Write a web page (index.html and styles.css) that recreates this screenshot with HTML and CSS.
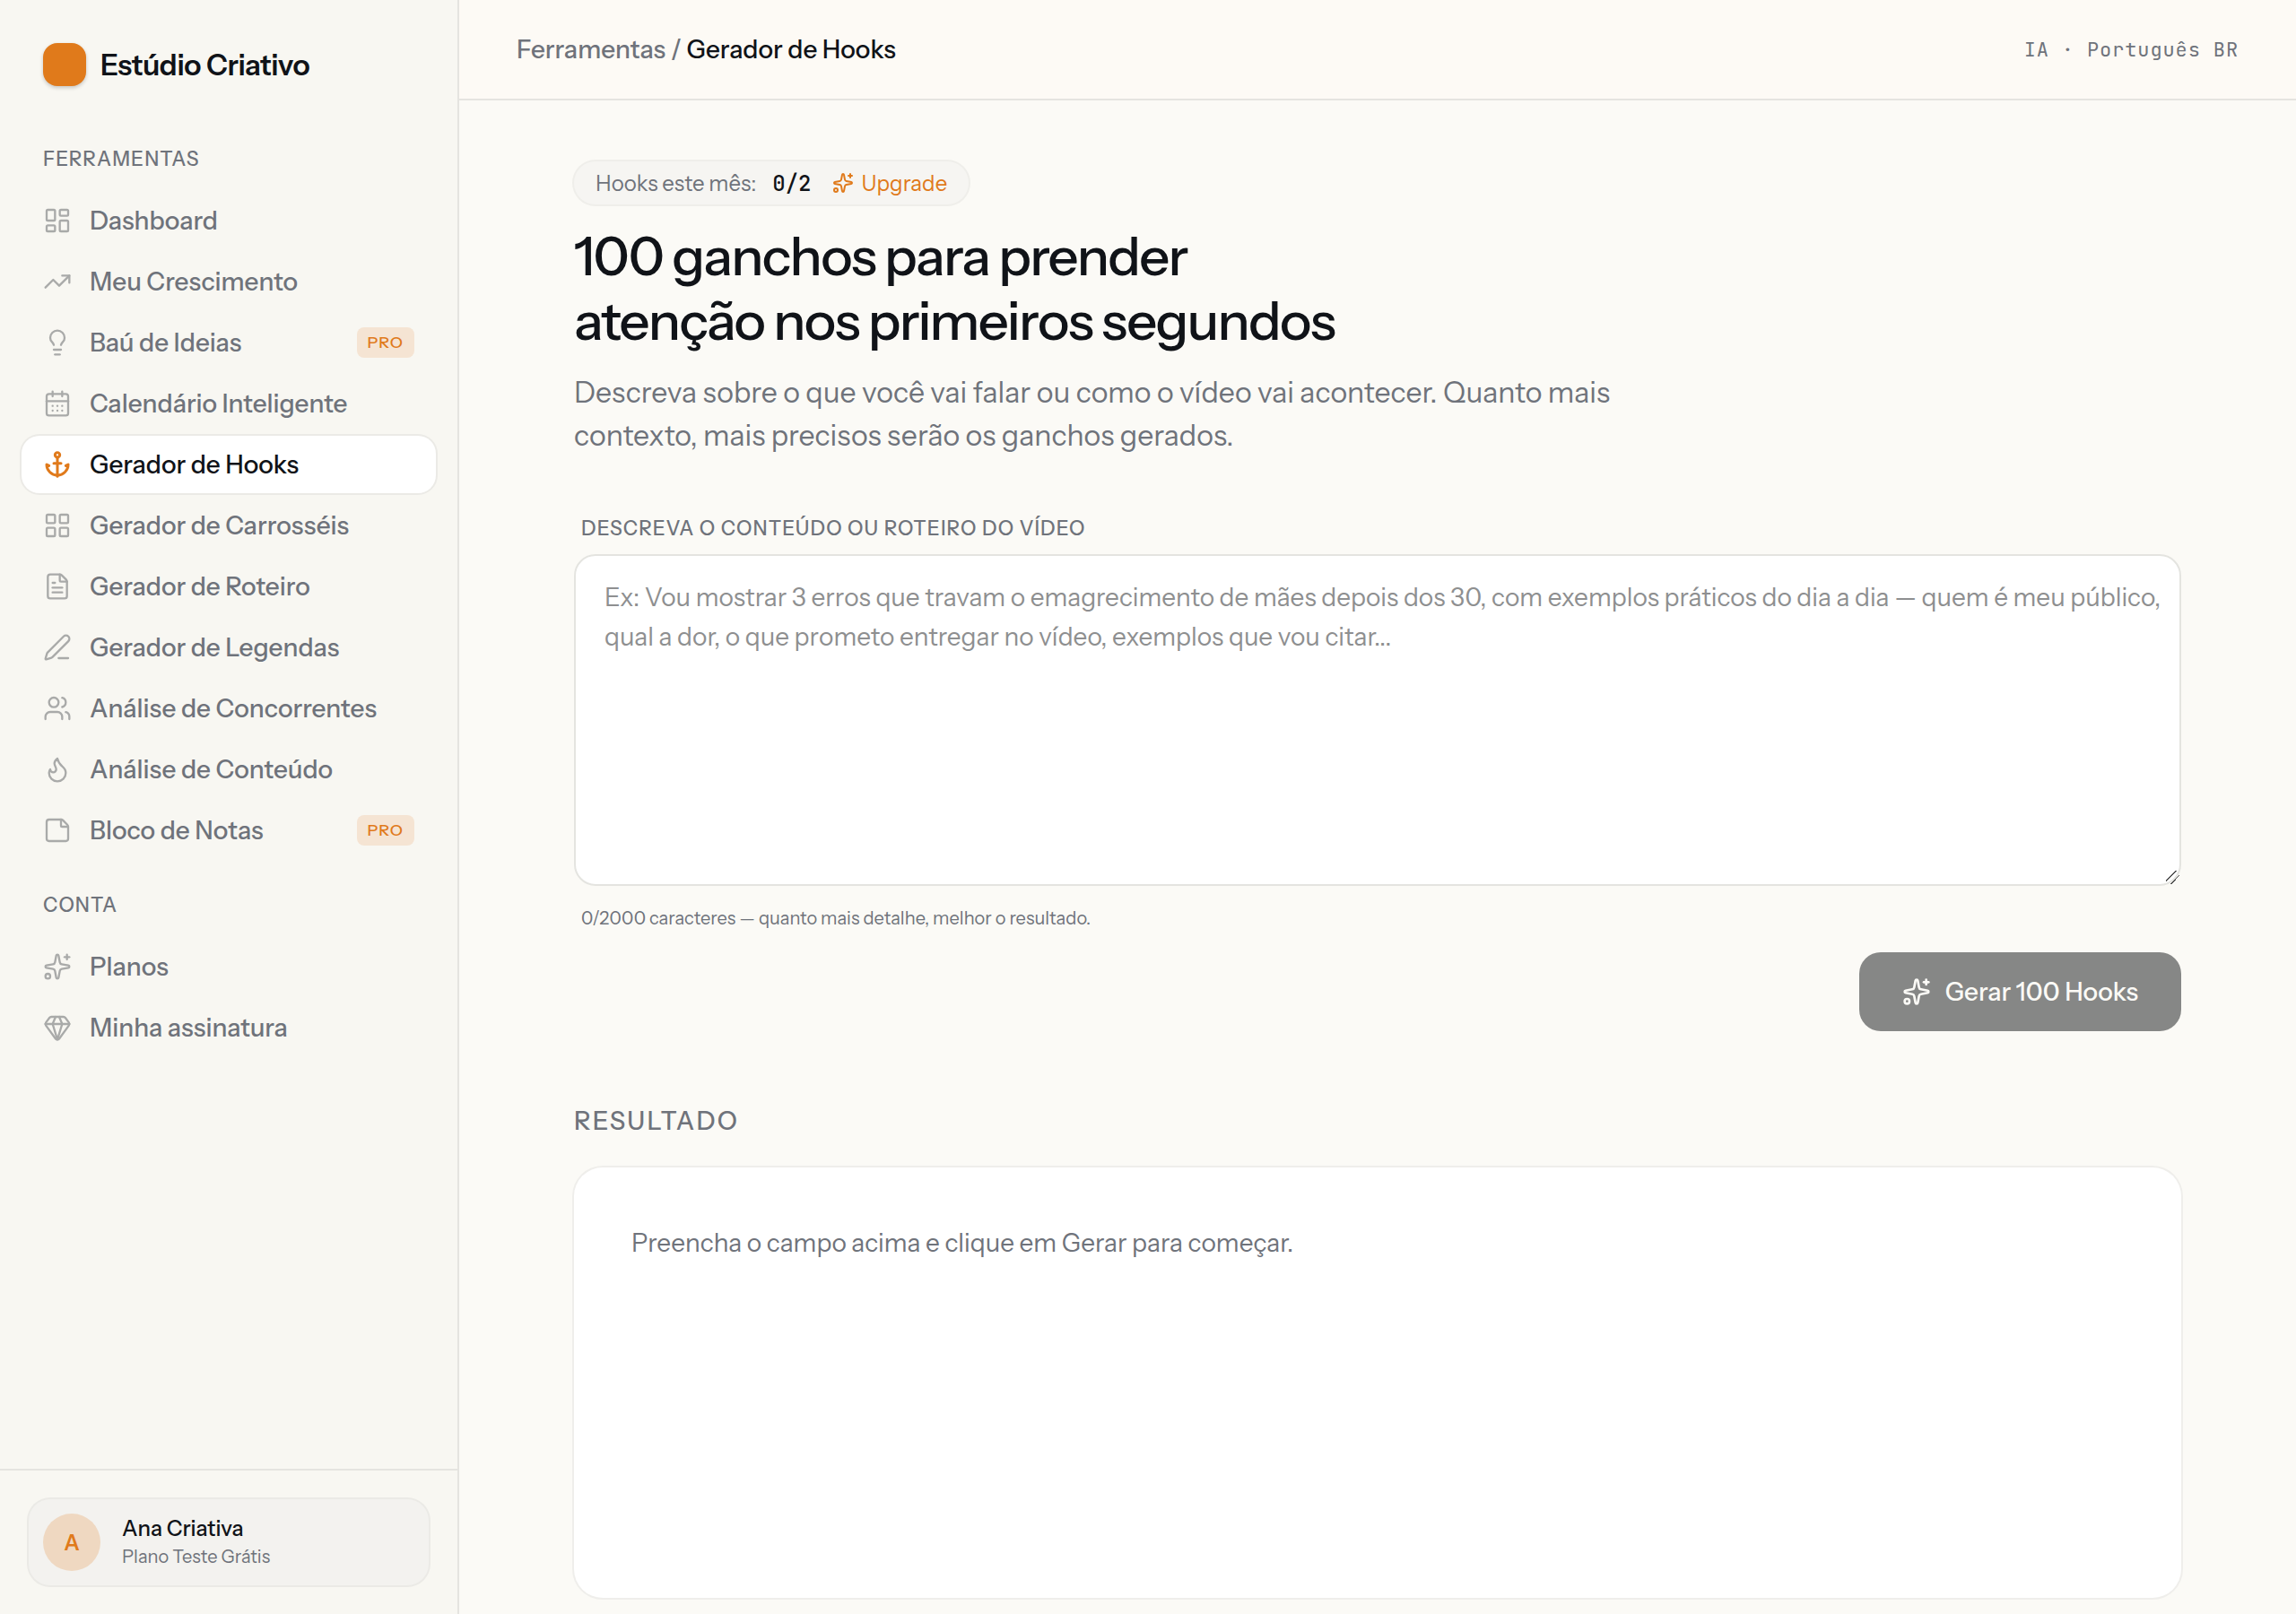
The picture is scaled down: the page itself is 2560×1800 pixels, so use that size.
FILE: index.html
```html
<!DOCTYPE html>
<html lang="pt-BR">
<head>
    <meta charset="UTF-8">
    <meta name="viewport" content="width=device-width, initial-scale=1.0">
    <title>Gerador de Hooks - Estúdio Criativo</title>

    <link rel="stylesheet" href="styles.css">
</head>
<body>
    <!-- menu lateral -->
    <aside class="sidebar">
        <a class="brand" href="#">
            <span class="brand-logo"></span>
            <span>Estúdio Criativo</span>
        </a>

        <nav class="menu">
            <h2 class="menu-title">Ferramentas</h2>
            <ul class="menu-list">
                <li>
                    <a class="menu-item" href="#">
                        <svg class="icon" viewBox="0 0 24 24"><rect x="3" y="3" width="7" height="9" rx="1"/><rect x="14" y="3" width="7" height="5" rx="1"/><rect x="14" y="12" width="7" height="9" rx="1"/><rect x="3" y="16" width="7" height="5" rx="1"/></svg>
                        Dashboard
                    </a>
                </li>
                <li>
                    <a class="menu-item" href="#">
                        <svg class="icon" viewBox="0 0 24 24"><path d="M16 7h6v6"/><path d="m22 7-8.5 8.5-5-5L2 17"/></svg>
                        Meu Crescimento
                    </a>
                </li>
                <li>
                    <a class="menu-item" href="#">
                        <svg class="icon" viewBox="0 0 24 24"><path d="M15 14c.2-1 .7-1.7 1.5-2.5 1-.9 1.5-2.2 1.5-3.5A6 6 0 0 0 6 8c0 1 .2 2.2 1.5 3.5.7.7 1.3 1.5 1.5 2.5"/><path d="M9 18h6"/><path d="M10 22h4"/></svg>
                        Baú de Ideias
                        <span class="pro">PRO</span>
                    </a>
                </li>
                <li>
                    <a class="menu-item" href="#">
                        <svg class="icon" viewBox="0 0 24 24"><path d="M8 2v4"/><path d="M16 2v4"/><rect x="3" y="4" width="18" height="18" rx="2"/><path d="M3 10h18"/><path d="M8 14h.01"/><path d="M12 14h.01"/><path d="M16 14h.01"/><path d="M8 18h.01"/><path d="M12 18h.01"/><path d="M16 18h.01"/></svg>
                        Calendário Inteligente
                    </a>
                </li>
                <li>
                    <a class="menu-item active" href="#" aria-current="page">
                        <svg class="icon" viewBox="0 0 24 24"><path d="M12 6v16"/><path d="m19 13 2-1a9 9 0 0 1-18 0l2 1"/><path d="M9 11h6"/><circle cx="12" cy="4" r="2"/></svg>
                        Gerador de Hooks
                    </a>
                </li>
                <li>
                    <a class="menu-item" href="#">
                        <svg class="icon" viewBox="0 0 24 24"><rect x="3" y="3" width="7" height="7" rx="1"/><rect x="14" y="3" width="7" height="7" rx="1"/><rect x="14" y="14" width="7" height="7" rx="1"/><rect x="3" y="14" width="7" height="7" rx="1"/></svg>
                        Gerador de Carrosséis
                    </a>
                </li>
                <li>
                    <a class="menu-item" href="#">
                        <svg class="icon" viewBox="0 0 24 24"><path d="M6 22a2 2 0 0 1-2-2V4a2 2 0 0 1 2-2h8a2.4 2.4 0 0 1 1.704.706l3.588 3.588A2.4 2.4 0 0 1 20 8v12a2 2 0 0 1-2 2z"/><path d="M14 2v5a1 1 0 0 0 1 1h5"/><path d="M10 9H8"/><path d="M16 13H8"/><path d="M16 17H8"/></svg>
                        Gerador de Roteiro
                    </a>
                </li>
                <li>
                    <a class="menu-item" href="#">
                        <svg class="icon" viewBox="0 0 24 24"><path d="M13 21h8"/><path d="M21.174 6.812a1 1 0 0 0-3.986-3.987L3.842 16.174a2 2 0 0 0-.5.83l-1.321 4.352a.5.5 0 0 0 .623.622l4.353-1.32a2 2 0 0 0 .83-.497z"/></svg>
                        Gerador de Legendas
                    </a>
                </li>
                <li>
                    <a class="menu-item" href="#">
                        <svg class="icon" viewBox="0 0 24 24"><path d="M16 21v-2a4 4 0 0 0-4-4H6a4 4 0 0 0-4 4v2"/><path d="M16 3.128a4 4 0 0 1 0 7.744"/><path d="M22 21v-2a4 4 0 0 0-3-3.87"/><circle cx="9" cy="7" r="4"/></svg>
                        Análise de Concorrentes
                    </a>
                </li>
                <li>
                    <a class="menu-item" href="#">
                        <svg class="icon" viewBox="0 0 24 24"><path d="M12 3q1 4 4 6.5t3 5.5a1 1 0 0 1-14 0 5 5 0 0 1 1-3 1 1 0 0 0 5 0c0-2-1.5-3-1.5-5q0-2 2.5-4"/></svg>
                        Análise de Conteúdo
                    </a>
                </li>
                <li>
                    <a class="menu-item" href="#">
                        <svg class="icon" viewBox="0 0 24 24"><path d="M21 9a2.4 2.4 0 0 0-.706-1.706l-3.588-3.588A2.4 2.4 0 0 0 15 3H5a2 2 0 0 0-2 2v14a2 2 0 0 0 2 2h14a2 2 0 0 0 2-2z"/><path d="M15 3v5a1 1 0 0 0 1 1h5"/></svg>
                        Bloco de Notas
                        <span class="pro">PRO</span>
                    </a>
                </li>
            </ul>

            <h2 class="menu-title">Conta</h2>
            <ul class="menu-list">
                <li>
                    <a class="menu-item" href="#">
                        <svg class="icon" viewBox="0 0 24 24"><path d="M11.017 2.814a1 1 0 0 1 1.966 0l1.051 5.558a2 2 0 0 0 1.594 1.594l5.558 1.051a1 1 0 0 1 0 1.966l-5.558 1.051a2 2 0 0 0-1.594 1.594l-1.051 5.558a1 1 0 0 1-1.966 0l-1.051-5.558a2 2 0 0 0-1.594-1.594l-5.558-1.051a1 1 0 0 1 0-1.966l5.558-1.051a2 2 0 0 0 1.594-1.594z"/><path d="M20 2v4"/><path d="M22 4h-4"/><circle cx="4" cy="20" r="2"/></svg>
                        Planos
                    </a>
                </li>
                <li>
                    <a class="menu-item" href="#">
                        <svg class="icon" viewBox="0 0 24 24"><path d="M10.5 3 8 9l4 13 4-13-2.5-6"/><path d="M17 3a2 2 0 0 1 1.6.8l3 4a2 2 0 0 1 .013 2.382l-7.99 10.986a2 2 0 0 1-3.247 0l-7.99-10.986A2 2 0 0 1 2.4 7.8l2.998-3.997A2 2 0 0 1 7 3z"/><path d="M2 9h20"/></svg>
                        Minha assinatura
                    </a>
                </li>
            </ul>
        </nav>

        <div class="sidebar-footer">
            <a class="user" href="#">
                <span class="avatar">A</span>
                <span class="user-info">
                    <span class="user-name">Ana Criativa</span>
                    <span class="user-plan">Plano Teste Grátis</span>
                </span>
            </a>
        </div>
    </aside>

    <!-- conteúdo -->
    <div class="page">
        <header class="topbar">
            <nav class="breadcrumb">
                <a href="#">Ferramentas</a> / <span class="current">Gerador de Hooks</span>
            </nav>
            <span class="lang">IA · Português BR</span>
        </header>

        <main class="content">
            <div class="usage">
                <span>Hooks este mês:</span>
                <span class="usage-count">0/2</span>
                <a class="upgrade" href="#">
                    <svg class="icon" viewBox="0 0 24 24"><path d="M11.017 2.814a1 1 0 0 1 1.966 0l1.051 5.558a2 2 0 0 0 1.594 1.594l5.558 1.051a1 1 0 0 1 0 1.966l-5.558 1.051a2 2 0 0 0-1.594 1.594l-1.051 5.558a1 1 0 0 1-1.966 0l-1.051-5.558a2 2 0 0 0-1.594-1.594l-5.558-1.051a1 1 0 0 1 0-1.966l5.558-1.051a2 2 0 0 0 1.594-1.594z"/><path d="M20 2v4"/><path d="M22 4h-4"/><circle cx="4" cy="20" r="2"/></svg>
                    Upgrade
                </a>
            </div>

            <h1>100 ganchos para prender<br>atenção nos primeiros segundos</h1>
            <p class="lead">Descreva sobre o que você vai falar ou como o vídeo vai acontecer. Quanto mais contexto, mais precisos serão os ganchos gerados.</p>

            <form class="hook-form">
                <label for="roteiro">Descreva o conteúdo ou roteiro do vídeo</label>
                <textarea id="roteiro" maxlength="2000" placeholder="Ex: Vou mostrar 3 erros que travam o emagrecimento de mães depois dos 30, com exemplos práticos do dia a dia — quem é meu público, qual a dor, o que prometo entregar no vídeo, exemplos que vou citar..."></textarea>
                <p class="counter">0/2000 caracteres — quanto mais detalhe, melhor o resultado.</p>
                <button class="generate" type="submit" disabled>
                    <svg class="icon" viewBox="0 0 24 24"><path d="M11.017 2.814a1 1 0 0 1 1.966 0l1.051 5.558a2 2 0 0 0 1.594 1.594l5.558 1.051a1 1 0 0 1 0 1.966l-5.558 1.051a2 2 0 0 0-1.594 1.594l-1.051 5.558a1 1 0 0 1-1.966 0l-1.051-5.558a2 2 0 0 0-1.594-1.594l-5.558-1.051a1 1 0 0 1 0-1.966l5.558-1.051a2 2 0 0 0 1.594-1.594z"/><path d="M20 2v4"/><path d="M22 4h-4"/><circle cx="4" cy="20" r="2"/></svg>
                    Gerar 100 Hooks
                </button>
            </form>

            <section class="result">
                <h2>Resultado</h2>
                <div class="result-card">
                    <p>Preencha o campo acima e clique em Gerar para começar.</p>
                </div>
            </section>
        </main>
    </div>
</body>
</html>
```

FILE: styles.css
```css
* {
    box-sizing: border-box;
}

body {
    display: flex;
    min-height: 100vh;
    margin: 0;
    font-family: "Instrument Sans", Inter, sans-serif;
    font-size: 28px;
    color: #6f737b;
    background-color: #fbfaf6;
}

h1, h2, p, ul {
    margin: 0;
    padding: 0;
    font-weight: 400;
}

ul {
    list-style: none;
}

a {
    color: inherit;
    text-decoration: none;
}

.icon {
    width: 32px;
    height: 32px;
    flex-shrink: 0;
    fill: none;
    stroke: currentColor;
    stroke-width: 1.75;
    stroke-linecap: round;
    stroke-linejoin: round;
}

/* menu lateral */
.sidebar {
    position: sticky;
    top: 0;
    display: flex;
    flex-direction: column;
    flex: 0 0 512px;
    height: 100vh;
    background-color: #f8f7f2;
    border-right: 2px solid #e5e4e0;
}

.brand {
    display: flex;
    align-items: center;
    gap: 16px;
    padding: 48px 48px 30px;
    font-size: 32px;
    font-weight: 600;
    letter-spacing: -0.01em;
    color: #101318;
}

.brand-logo {
    width: 48px;
    height: 48px;
    border-radius: 16px;
    background-color: #e07a1b;
    box-shadow: 0 2px 4px rgba(0,0,0, 0.2);
}

.menu {
    flex: 1;
    padding: 0 24px;
    overflow: hidden;
}

.menu-title {
    padding: 36px 24px 20px;
    font-size: 22px;
    font-weight: 500;
    line-height: 32px;
    letter-spacing: 0.05em;
    text-transform: uppercase;
}

.menu-list {
    display: flex;
    flex-direction: column;
    gap: 4px;
}

.menu-item {
    display: flex;
    align-items: center;
    gap: 20px;
    height: 64px;
    padding: 0 24px;
    border-radius: 20px;
    font-weight: 500;
}

.menu-item .icon {
    color: #a9aaa9;
}

.menu-item:hover {
    background-color: #f3f2ef;
}

.menu-item.active {
    color: #101318;
    background-color: white;
    box-shadow: 0 0 0 2px #ebeae6;
}

.menu-item.active .icon {
    color: #e07a1b;
    stroke-width: 2.25;
}

.pro {
    margin-left: auto;
    padding: 0 12px;
    border-radius: 8px;
    font-size: 18px;
    line-height: 34px;
    letter-spacing: 0.05em;
    color: #e07a1b;
    background-color: #f5e4d3;
}

.sidebar-footer {
    padding: 32px;
    border-top: 2px solid #e5e4e0;
}

.user {
    display: flex;
    align-items: center;
    gap: 24px;
    padding: 16px;
    border-radius: 24px;
    background-color: #f3f2ef;
    box-shadow: 0 0 0 2px #ebeae6;
}

.avatar {
    display: flex;
    align-items: center;
    justify-content: center;
    width: 64px;
    height: 64px;
    border-radius: 50%;
    font-size: 24px;
    font-weight: 600;
    color: #e07a1b;
    background-color: #efd8c1;
}

.user-info {
    display: flex;
    flex-direction: column;
}

.user-name {
    font-size: 24px;
    font-weight: 500;
    line-height: 32px;
    color: #101318;
}

.user-plan {
    font-size: 20px;
    line-height: 30px;
}

/* conteúdo */
.page {
    flex: 1;
    min-width: 0;
}

.topbar {
    display: flex;
    align-items: center;
    justify-content: space-between;
    height: 112px;
    padding: 0 64px;
    background-color: #fdfaf5;
    border-bottom: 2px solid #e5e4e0;
}

.breadcrumb {
    font-weight: 500;
}

.current {
    color: #101318;
}

.lang {
    font-family: "JetBrains Mono", "Liberation Mono", monospace;
    font-size: 22px;
    letter-spacing: 0.04em;
}

.content {
    max-width: 2048px;
    margin: 0 auto;
    padding: 68px 128px 18px;
}

.usage {
    display: inline-flex;
    align-items: center;
    height: 48px;
    gap: 18px;
    padding: 0 24px;
    border-radius: 24px;
    font-size: 24px;
    background-color: #f6f5f2;
    box-shadow: 0 0 0 2px #efeeea;
}

.usage-count {
    font-family: "JetBrains Mono", "Liberation Mono", monospace;
    font-weight: 500;
    color: #101318;
}

.upgrade {
    display: flex;
    align-items: center;
    gap: 8px;
    margin-left: 6px;
    color: #e07a1b;
}

.upgrade .icon {
    width: 24px;
    height: 24px;
    stroke-width: 2;
}

h1 {
    margin-top: 22px;
    font-size: 60px;
    font-weight: 500;
    line-height: 72px;
    letter-spacing: -0.03em;
    color: #101318;
}

.lead {
    max-width: 1200px;
    margin-top: 20px;
    font-size: 32px;
    line-height: 48px;
}

.hook-form {
    display: flex;
    flex-direction: column;
    margin-top: 64px;
}

.hook-form label {
    padding: 0 8px;
    font-size: 22px;
    font-weight: 500;
    line-height: 32px;
    letter-spacing: 0.05em;
    text-transform: uppercase;
}

textarea {
    width: 100%;
    height: 370px;
    margin-top: 12px;
    padding: 24px 16px 24px 32px;
    border: 2px solid #e4e4e0;
    border-radius: 24px;
    font-family: inherit;
    font-size: 28px;
    line-height: 44px;
    color: #101318;
    background-color: white;
    resize: vertical;
}

textarea::placeholder {
    color: #8e8f90;
}

textarea::-webkit-resizer {
    background: linear-gradient(135deg, transparent 35%, #555 35% 41%, transparent 41% 64%, #555 64% 70%, transparent 70%);
}

.counter {
    margin-top: 22px;
    padding: 0 8px;
    font-size: 20px;
    line-height: 28px;
}

.generate {
    display: flex;
    align-items: center;
    align-self: flex-end;
    gap: 16px;
    height: 88px;
    margin-top: 24px;
    padding: 0 48px;
    border: 0;
    border-radius: 24px;
    font-family: inherit;
    font-size: 28px;
    font-weight: 500;
    color: #fbfaf6;
    background-color: #868786;
}

.generate .icon {
    stroke-width: 2;
}

.result {
    margin-top: 80px;
}

.result h2 {
    font-size: 28px;
    font-weight: 500;
    line-height: 40px;
    letter-spacing: 0.08em;
    text-transform: uppercase;
}

.result-card {
    min-height: 480px;
    margin-top: 32px;
    padding: 64px;
    border-radius: 32px;
    line-height: 40px;
    background-color: white;
    box-shadow: 0 0 0 2px #efeeeb;
}
```
